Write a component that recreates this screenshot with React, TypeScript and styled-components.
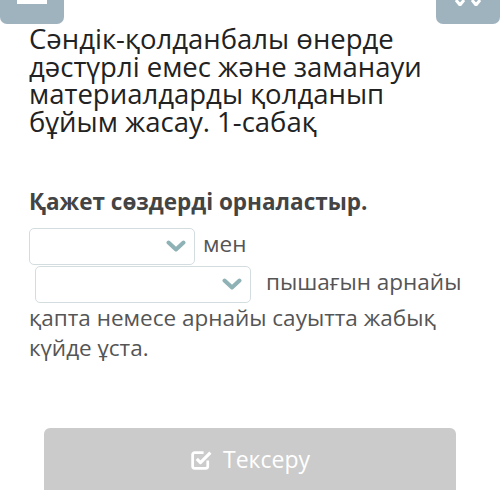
import React from "react";
import styled, { createGlobalStyle } from "styled-components";

const GlobalStyle = createGlobalStyle`
  html, body {
    margin: 0;
    padding: 0;
    background: #ffffff;
    overflow: hidden;
  }
  body {
    font-family: "Open Sans", "Noto Sans", sans-serif;
  }
`;

const Page = styled.div`
  width: 500px;
  height: 490px;
  display: flex;
  flex-direction: column;
  overflow: hidden;
`;

const TopBar = styled.div`
  display: flex;
  justify-content: space-between;
  height: 24px;
`;

const NavButton = styled.div`
  width: 64px;
  height: 24px;
  background: #9fb3bf;
  border-radius: 0 0 7px 7px;
  display: flex;
  justify-content: center;
  align-items: flex-start;
  overflow: hidden;
`;

const Content = styled.div`
  padding: 0 29px;
  display: flex;
  flex-direction: column;
`;

const Title = styled.h1`
  margin: 1px 0 0;
  max-width: 420px;
  font-size: 27.5px;
  line-height: 27.7px;
  font-weight: 400;
  color: #222;
`;

const Task = styled.h2`
  margin: 52px 0 0;
  font-size: 22.5px;
  line-height: 28px;
  font-weight: 700;
  color: #444;
`;

const Sentence = styled.div`
  margin-top: 11px;
  font-size: 22.5px;
  line-height: 30px;
  color: #555;
`;

const Select = styled.span<{ $w: number; $ml?: number; $mr?: number }>`
  display: inline-flex;
  align-items: center;
  justify-content: flex-end;
  box-sizing: border-box;
  width: ${(p) => p.$w}px;
  height: 37px;
  margin: 1px ${(p) => p.$mr ?? 8}px 0 ${(p) => p.$ml ?? 0}px;
  padding-right: 8px;
  border: 1.5px solid #d3dde0;
  border-radius: 5px;
  vertical-align: middle;
  background: #fff;
`;

const Chevron = () => (
  <svg width="20" height="12" viewBox="0 0 20 12">
    <path d="M2.5 2.5 L10 9.5 L17.5 2.5" fill="none" stroke="#8fb2b6" strokeWidth="4" strokeLinecap="round" strokeLinejoin="round" />
  </svg>
);

const Break = styled.span`
  display: block;
  height: 0;
`;

const Footer = styled.div`
  margin: auto 44px 0;
  height: 62px;
  background: #cbcbcb;
  border-radius: 6px 6px 0 0;
  display: flex;
  align-items: center;
  justify-content: center;
  gap: 10px;
  color: #fff;
  font-size: 23px;
`;

const CheckIcon = () => (
  <svg width="23" height="23" viewBox="0 0 22 22">
    <path d="M17 12 V17.5 A2 2 0 0 1 15 19.5 H4.5 A2 2 0 0 1 2.5 17.5 V6.5 A2 2 0 0 1 4.5 4.5 H13" fill="none" stroke="#fff" strokeWidth="2.6" />
    <path d="M6.5 10.5 L10 14 L19.5 4.5" fill="none" stroke="#fff" strokeWidth="3" strokeLinejoin="round" />
  </svg>
);

export default function App() {
  return (
    <Page>
      <GlobalStyle />
      <TopBar>
        <NavButton>
          <svg width="30" height="5" viewBox="0 0 30 5">
            <rect x="0" y="0" width="30" height="4" fill="#fff" />
          </svg>
        </NavButton>
        <NavButton>
          <svg width="28" height="6" viewBox="0 0 28 6">
            <path d="M2 0 L6 5 L10 0 M18 0 L22 5 L26 0" fill="none" stroke="#fff" strokeWidth="3" />
          </svg>
        </NavButton>
      </TopBar>
      <Content>
        <Title>
          Сәндік-қолданбалы өнерде дәстүрлі емес және заманауи материалдарды
          қолданып бұйым жасау. 1-сабақ
        </Title>
        <Task>Қажет сөздерді орналастыр.</Task>
        <Sentence>
          <Select $w={166}>
            <Chevron />
          </Select>
          мен
          <Break />
          <Select $w={216} $ml={6} $mr={15}>
            <Chevron />
          </Select>
          пышағын арнайы қапта немесе арнайы сауытта жабық күйде ұста.
        </Sentence>
      </Content>
      <Footer>
        <CheckIcon />
        <span>Тексеру</span>
      </Footer>
    </Page>
  );
}
